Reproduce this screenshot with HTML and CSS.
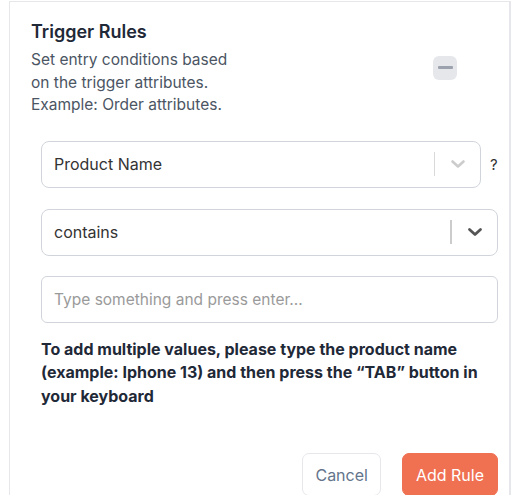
FILE: index.html
```html
<!DOCTYPE html>
<html lang="en">
<head>
<meta charset="utf-8">
<title>Trigger Rules</title>
<link rel="stylesheet" href="styles.css">
</head>
<body>
<div class="panel">
  <div class="header">
    <div class="intro">
      <h2 class="title">Trigger Rules</h2>
      <p class="desc">Set entry conditions based on the trigger attributes. Example: Order attributes.</p>
    </div>
    <button class="collapse" type="button" aria-label="Collapse"><span class="minus"></span></button>
  </div>

  <div class="fields">
    <div class="row">
      <div class="select">
        <span class="value">Product Name</span>
        <span class="sep"></span>
        <span class="indicator">
          <svg class="chev light" width="16" height="10" viewBox="0 0 16 10"><polyline points="2.5,2.5 8,7.5 13.5,2.5" fill="none" stroke-width="2.6" stroke-linecap="round" stroke-linejoin="round"/></svg>
        </span>
      </div>
      <span class="help">?</span>
    </div>

    <div class="select">
      <span class="value">contains</span>
      <span class="sep sep-strong"></span>
      <span class="indicator">
        <svg class="chev dark" width="16" height="10" viewBox="0 0 16 10"><polyline points="2.5,2.5 8,7.5 13.5,2.5" fill="none" stroke-width="2.8" stroke-linecap="round" stroke-linejoin="round"/></svg>
      </span>
    </div>

    <div class="input"><span class="placeholder">Type something and press enter...</span></div>

    <p class="note">To add multiple values, please type the product name (example: Iphone 13) and then press the “TAB” button in your keyboard</p>
  </div>

  <div class="actions">
    <button class="btn btn-cancel" type="button">Cancel</button>
    <button class="btn btn-primary" type="button">Add Rule</button>
  </div>
</div>
</body>
</html>
```

FILE: styles.css
```css
* { box-sizing: border-box; }

html, body {
  margin: 0;
  padding: 0;
  background: #ffffff;
}

body {
  font-family: Inter, "Noto Sans", "Liberation Sans", sans-serif;
  color: #1f2937;
}

.panel {
  margin: 1px 7px 0 9px;
  border-top: 1px solid #e5e7eb;
  border-left: 1px solid #e5e7eb;
  border-right: 2px solid #e5e7eb;
  padding: 17px 11px 40px 21px;
}

.header {
  display: flex;
  align-items: center;
  justify-content: space-between;
  padding-right: 41px;
}

.title {
  margin: 0;
  font-size: 18px;
  line-height: 26px;
  font-weight: 600;
  color: #1f2937;
}

.desc {
  margin: 4px 0 0;
  width: 206px;
  font-size: 15.5px;
  line-height: 22.5px;
  color: #4b5563;
}

.collapse {
  width: 24px;
  height: 24px;
  border: 0;
  border-radius: 6px;
  background: #e5e7eb;
  padding: 0;
  display: flex;
  align-items: center;
  justify-content: center;
}

.minus {
  display: block;
  width: 15px;
  height: 3px;
  border-radius: 1px;
  background: #9ca3af;
}

.fields {
  margin-top: 24px;
  padding-left: 10px;
  display: flex;
  flex-direction: column;
  gap: 21px;
}

.row {
  display: flex;
  align-items: center;
  gap: 9px;
}

.row .select { flex: 1; }

.select {
  height: 47px;
  border: 1px solid #d1d5db;
  border-radius: 8px;
  display: flex;
  align-items: center;
  padding-left: 12px;
  background: #fff;
}

.value {
  flex: 1;
  font-size: 16px;
  color: #333333;
}

.sep {
  width: 1px;
  height: 24px;
  background: #d9d9d9;
}

.sep-strong {
  width: 2px;
  background: #cccccc;
}

.indicator {
  width: 45px;
  display: flex;
  align-items: center;
  justify-content: center;
}

.chev.light { stroke: #cccccc; }
.chev.dark { stroke: #555555; }

.help {
  font-size: 15px;
  color: #333333;
  width: 8px;
}

.input {
  height: 47px;
  border: 1px solid #d1d5db;
  border-radius: 6px;
  display: flex;
  align-items: center;
  padding-left: 12px;
  margin-top: -1px;
}

.placeholder {
  font-size: 15.5px;
  color: #9a9a9a;
}

.note {
  margin: -6px 0 0;
  font-size: 16px;
  line-height: 23.5px;
  font-weight: 700;
  color: #1f2937;
}

.actions {
  margin-top: 45px;
  display: flex;
  justify-content: flex-end;
  gap: 21px;
}

.btn {
  font-family: Inter, "Noto Sans", "Liberation Sans", sans-serif;
  font-size: 16px;
  height: 43px;
  border-radius: 7px;
  padding: 0 12px;
}

.btn-cancel {
  background: #ffffff;
  border: 1px solid #e5e7eb;
  color: #64748b;
}

.btn-primary {
  background: #f07052;
  border: 1px solid #f07052;
  color: #ffffff;
  padding: 0 13px;
}
```
